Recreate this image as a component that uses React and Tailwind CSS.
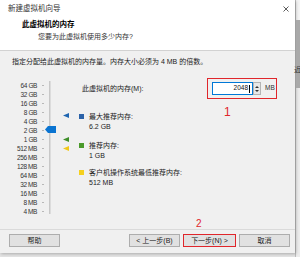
import React from 'react';

const cjk = { fontFamily: '"Liberation Sans", "Noto Sans CJK SC", sans-serif' };

const scale = ['64 GB', '32 GB', '16 GB', '8 GB', '4 GB', '2 GB', '1 GB', '512 MB', '256 MB', '128 MB', '64 MB', '32 MB', '16 MB', '8 MB', '4 MB'];

function Marker({ color, top }) {
  return (
    <svg className={`absolute left-[63px] ${top}`} width="6" height="5" viewBox="0 0 6 5">
      <polygon points="0,2.5 6,0 6,5" fill={color} />
    </svg>
  );
}

function Legend({ color, label, value, className }) {
  return (
    <div className={`flex items-start ${className}`}>
      <div className={`w-[5px] h-[5px] mt-[2px] ${color}`} />
      <div className="ml-[5px] text-[7px] leading-[9.5px] text-[#222]">
        <div>{label}</div>
        <div>{value}</div>
      </div>
    </div>
  );
}

function Btn({ children, className = '' }) {
  return (
    <div className={`h-[13px] flex items-center justify-center bg-[#e1e1e1] border border-[#adadad] text-[7px] leading-none text-[#222] ${className}`}>
      {children}
    </div>
  );
}

export default function App() {
  return (
    <div className="w-[300px] h-[257px] flex bg-[#e4e4e4] overflow-hidden select-none" style={cjk}>
      <div className="relative w-[295px] h-[253px] flex flex-col bg-white shrink-0 shadow-[1px_1px_3px_rgba(0,0,0,0.25)]">
        {/* title bar */}
        <div className="h-[18px] flex items-center pl-[8px] pr-[6px]">
          <span className="text-[7.5px] leading-[10px] text-[#333]">新建虚拟机向导</span>
          <svg className="ml-auto" width="6" height="6" viewBox="0 0 6 6">
            <path d="M0.5 0.5 L5.5 5.5 M5.5 0.5 L0.5 5.5" stroke="#333" strokeWidth="0.8" />
          </svg>
        </div>

        {/* header */}
        <div className="h-[33px] pt-[2px] border-b border-[#d2d2d2]">
          <div className="pl-[22px] text-[7.5px] leading-[10px] font-bold text-black">此虚拟机的内存</div>
          <div className="pl-[38px] mt-[2px] text-[7px] leading-[10px] text-[#333]">您要为此虚拟机使用多少内存?</div>
        </div>

        {/* body */}
        <div className="h-[178px] bg-[#f0f0f0] pt-[6px]">
          <div className="pl-[12px] text-[7px] leading-[10px] text-[#222]">指定分配给此虚拟机的内存量。内存大小必须为 4 MB 的倍数。</div>

          <div className="mt-[11px] flex">
            {/* slider */}
            <div className="relative w-[79px] h-[138px] shrink-0">
              <div className="mt-[3px] flex flex-col">
                {scale.map((s) => (
                  <div key={s} className="h-[9px] flex items-center">
                    <span className="w-[37px] text-right text-[6.5px] tracking-[-0.4px] leading-[9px] text-[#333]" style={{ fontFamily: '"Liberation Sans", sans-serif' }}>{s}</span>
                    <span className="ml-[5px] w-[2px] h-px bg-[#b8b8b8]" />
                  </div>
                ))}
              </div>
              <div className="absolute left-[49px] top-[3px] w-[2px] h-[133px] bg-[#dcdcdc] border-l border-[#c8c8c8]" />
              <svg className="absolute left-[45px] top-[48px]" width="11" height="7" viewBox="0 0 11 7">
                <polygon points="0,3.5 3,0 11,0 11,7 3,7" fill="#0a74d1" />
              </svg>
              <Marker color="#1f65b0" top="top-[35px]" />
              <Marker color="#3f8f2a" top="top-[59px]" />
              <Marker color="#f1c81a" top="top-[68px]" />
            </div>

            {/* right column */}
            <div className="relative flex-1 flex flex-col">
              <div className="flex items-center h-[21px]">
                <span className="pl-[3px] text-[7px] leading-[10px] text-[#222]">此虚拟机的内存(M):</span>
                <div className="ml-auto mr-[18px] w-[70px] h-[21px] border border-[#e0262b] flex items-center pl-[4px]">
                  <div className="w-[41px] h-[13px] bg-white border border-[#0078d7] flex items-center justify-end pr-[2px]">
                    <span className="text-[6.5px] leading-none text-[#111]" style={{ fontFamily: '"Liberation Sans", sans-serif' }}>2048</span>
                    <span className="ml-[1px] w-px h-[8px] bg-black" />
                  </div>
                  <div className="w-[8px] h-[13px] bg-[#e8e8e8] border border-[#b5b5b5] flex flex-col items-center justify-center gap-[2px]">
                    <svg width="4" height="2" viewBox="0 0 4 2"><polygon points="0,2 2,0 4,2" fill="#333" /></svg>
                    <svg width="4" height="2" viewBox="0 0 4 2"><polygon points="0,0 4,0 2,2" fill="#333" /></svg>
                  </div>
                  <span className="ml-[4px] text-[6.5px] leading-none text-[#333]" style={{ fontFamily: '"Liberation Sans", sans-serif' }}>MB</span>
                </div>
              </div>

              <span className="absolute left-[145px] top-[28px] text-[12px] leading-[12px] text-[#e0262b]" style={{ fontFamily: '"Liberation Sans", sans-serif' }}>1</span>

              <Legend color="bg-[#2b62a8]" label="最大推荐内存:" value="6.2 GB" className="mt-[13px]" />
              <Legend color="bg-[#4a9a2a]" label="推荐内存:" value="1 GB" className="mt-[10px]" />
              <Legend color="bg-[#f5d01e]" label="客户机操作系统最低推荐内存:" value="512 MB" className="mt-[8px]" />
            </div>
          </div>
        </div>

        {/* footer */}
        <div className="relative flex-1 bg-[#f0f0f0] border-t border-[#dadada] flex items-start pt-[4px] pl-[9px] pr-[5px]">
          <Btn className="w-[51px]">帮助</Btn>
          <div className="ml-auto flex gap-[3px]">
            <Btn className="w-[51px]">&lt; 上一步(B)</Btn>
            <Btn className="w-[53px] border-[#e0262b]">下一步(N) &gt;</Btn>
            <Btn className="w-[51px]">取消</Btn>
          </div>
          <span className="absolute left-[196px] top-[-11px] text-[10px] leading-[10px] text-[#e0262b]" style={{ fontFamily: '"Liberation Sans", sans-serif' }}>2</span>
        </div>
      </div>

      {/* window behind */}
      <div className="flex-1 flex flex-col border-l border-[#bdbdbd]">
        <div className="h-[20px] bg-[#f4f4f4]" />
        <div className="h-[68px] bg-[#a9a9a9] relative">
          <span className="absolute left-[-2px] top-[46px] text-[7px] leading-none text-[#333]">近</span>
        </div>
        <div className="flex-1 bg-[#ececec]" />
      </div>
    </div>
  );
}
